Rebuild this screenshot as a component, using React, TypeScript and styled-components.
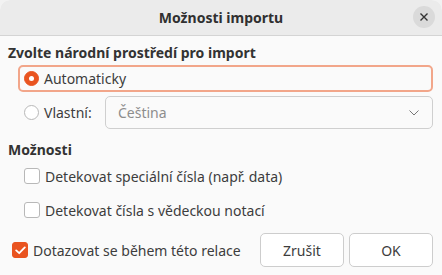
import React from "react";
import styled, { createGlobalStyle } from "styled-components";

const Global = createGlobalStyle`
  html, body { margin: 0; padding: 0; background: #f2f2f2; }
  body { font-family: "Noto Sans", "DejaVu Sans", sans-serif; color: #3d3d3d; }
  * { box-sizing: border-box; }
`;

const Dialog = styled.div`
  width: 442px;
  height: 275px;
  background: #fafafa;
  border-radius: 10px 10px 0 0;
  overflow: hidden;
  display: flex;
  flex-direction: column;
`;

const Header = styled.div`
  height: 36px;
  flex: none;
  background: #ebebeb;
  border-bottom: 1px solid #d4d4d4;
  display: flex;
  align-items: center;
  justify-content: center;
  position: relative;
`;

const Title = styled.div`
  font-weight: 700;
  font-size: 14px;
  color: #303030;
`;

const CloseBtn = styled.div`
  position: absolute;
  right: 7px;
  top: 6px;
  width: 22px;
  height: 22px;
  border-radius: 50%;
  background: #dadada;
  display: flex;
  align-items: center;
  justify-content: center;
`;

const Body = styled.div`
  flex: 1;
  display: flex;
  flex-direction: column;
  padding: 7px 9px 0 8px;
`;

const SectionLabel = styled.div<{ $mt?: number }>`
  font-weight: 700;
  font-size: 14px;
  line-height: 20px;
  margin-top: ${(p) => p.$mt ?? 0}px;
  color: #333;
`;

const FocusRow = styled.div`
  margin: 2px 0 0 10px;
  height: 27px;
  border: 2px solid #f2a68a;
  border-radius: 5px;
  display: flex;
  align-items: center;
  padding-left: 4px;
  gap: 5px;
`;

const PlainRow = styled.div`
  margin: 4px 0 0 16px;
  height: 33px;
  display: flex;
  align-items: center;
`;

const Radio = styled.div<{ $on?: boolean }>`
  width: 15px;
  height: 15px;
  border-radius: 50%;
  flex: none;
  background: ${(p) => (p.$on ? "#e95420" : "#fff")};
  border: 1px solid ${(p) => (p.$on ? "#e95420" : "#b8b8b8")};
  display: flex;
  align-items: center;
  justify-content: center;
  &::after {
    content: "";
    display: ${(p) => (p.$on ? "block" : "none")};
    width: 5px;
    height: 5px;
    border-radius: 50%;
    background: #fff;
  }
`;

const Text = styled.span<{ $muted?: boolean }>`
  font-size: 14px;
  color: ${(p) => (p.$muted ? "#8d8d8d" : "#3d3d3d")};
  white-space: nowrap;
`;

const RadioLabel = styled(Text)`
  margin-left: 5px;
  width: 61px;
`;

const Select = styled.div`
  flex: 1;
  height: 33px;
  border: 1px solid #cfcfcf;
  border-radius: 5px;
  background: #fafafa;
  display: flex;
  align-items: center;
  justify-content: space-between;
  padding: 0 13px 0 12px;
`;

const CheckRow = styled.div<{ $mt?: number }>`
  margin: ${(p) => p.$mt ?? 0}px 0 0 16px;
  height: 20px;
  display: flex;
  align-items: center;
  gap: 5px;
`;

const Check = styled.div<{ $on?: boolean }>`
  width: 16px;
  height: 16px;
  flex: none;
  border-radius: 3px;
  background: ${(p) => (p.$on ? "#e95420" : "#fff")};
  border: 1px solid ${(p) => (p.$on ? "#e95420" : "#b8b8b8")};
  display: flex;
  align-items: center;
  justify-content: center;
`;

const Footer = styled.div`
  margin-top: 13px;
  display: flex;
  align-items: center;
  padding-left: 4px;
`;

const FooterCheck = styled.div`
  flex: 1;
  display: flex;
  align-items: center;
  gap: 5px;
`;

const Buttons = styled.div`
  display: flex;
  gap: 5px;
`;

const Button = styled.div`
  width: 84px;
  height: 34px;
  border: 1px solid #cdcdcd;
  border-radius: 5px;
  background: #fff;
  display: flex;
  align-items: center;
  justify-content: center;
  font-size: 14px;
  color: #3d3d3d;
`;

export default function App() {
  return (
    <>
      <Global />
      <Dialog>
        <Header>
          <Title>Možnosti importu</Title>
          <CloseBtn>
            <svg width="10" height="10" viewBox="0 0 10 10">
              <path d="M1.5 1.5 L8.5 8.5 M8.5 1.5 L1.5 8.5" stroke="#333" strokeWidth="1.4" />
            </svg>
          </CloseBtn>
        </Header>
        <Body>
          <SectionLabel>Zvolte národní prostředí pro import</SectionLabel>
          <FocusRow>
            <Radio $on />
            <Text>Automaticky</Text>
          </FocusRow>
          <PlainRow>
            <Radio />
            <RadioLabel>Vlastní:</RadioLabel>
            <Select>
              <Text $muted>Čeština</Text>
              <svg width="10" height="6" viewBox="0 0 10 6">
                <path d="M0.5 0.5 L5 5 L9.5 0.5" stroke="#777" strokeWidth="1" fill="none" />
              </svg>
            </Select>
          </PlainRow>
          <SectionLabel $mt={11}>Možnosti</SectionLabel>
          <CheckRow $mt={6}>
            <Check />
            <Text>Detekovat speciální čísla (např. data)</Text>
          </CheckRow>
          <CheckRow $mt={14}>
            <Check />
            <Text>Detekovat čísla s vědeckou notací</Text>
          </CheckRow>
          <Footer>
            <FooterCheck>
              <Check $on>
                <svg width="11" height="9" viewBox="0 0 11 9">
                  <path d="M1.2 4.4 L4.2 7.2 L9.8 1.4" stroke="#fff" strokeWidth="1.8" fill="none" strokeLinecap="round" strokeLinejoin="round" />
                </svg>
              </Check>
              <Text>Dotazovat se během této relace</Text>
            </FooterCheck>
            <Buttons>
              <Button>Zrušit</Button>
              <Button>OK</Button>
            </Buttons>
          </Footer>
        </Body>
      </Dialog>
    </>
  );
}
